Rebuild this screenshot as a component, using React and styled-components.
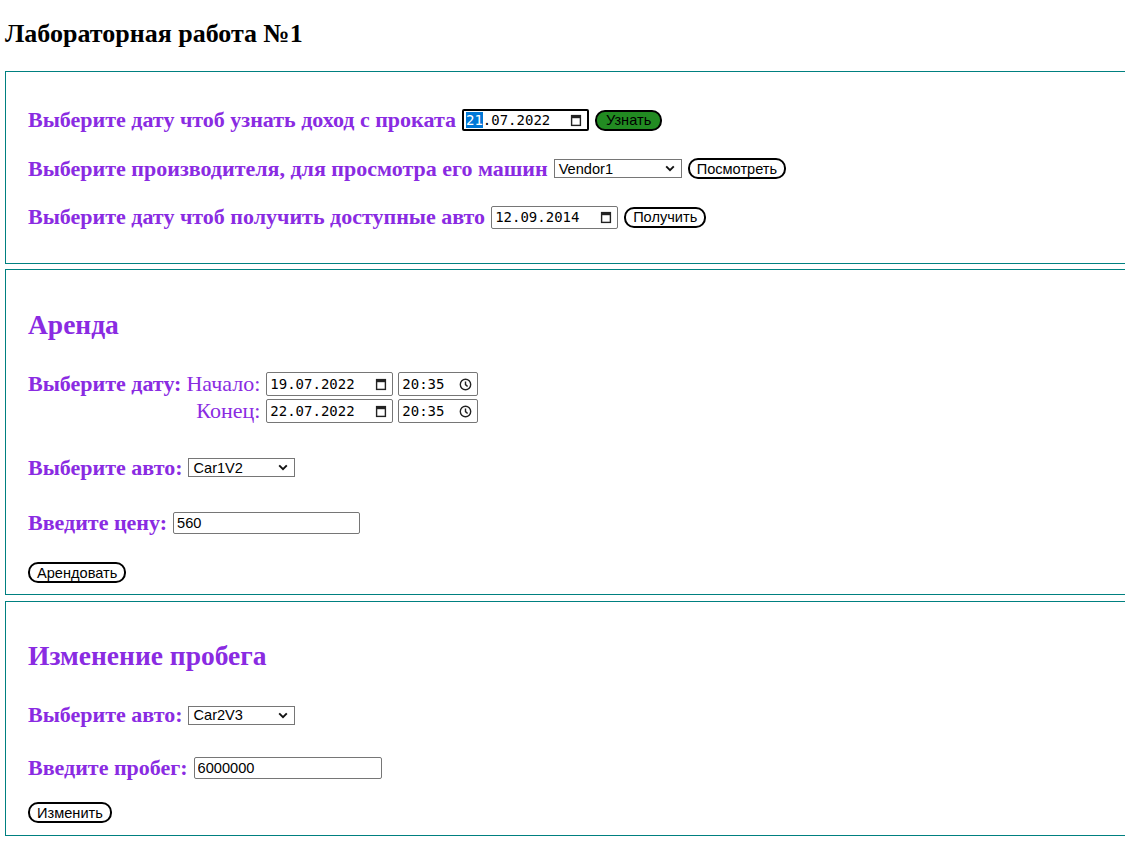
import React from 'react';
import styled, { createGlobalStyle } from 'styled-components';

const GlobalStyle = createGlobalStyle`
  html, body {
    margin: 0;
    padding: 0;
    background: #fff;
    overflow: hidden;
  }
  body {
    font-family: "Liberation Serif", "Times New Roman", serif;
  }
`;

const Page = styled.div`
  padding-left: 5px;
`;

const Title = styled.h1`
  margin: 0;
  padding-top: 19px;
  font-size: 26px;
  line-height: 30px;
  font-weight: bold;
  color: #000;
`;

const Box = styled.section`
  box-sizing: border-box;
  width: 1200px;
  margin-top: ${p => p.$mt}px;
  padding: ${p => p.$pt}px 0 ${p => p.$pb}px 22px;
  border: 1px solid #008080;
  display: flex;
  flex-direction: column;
  align-items: flex-start;
`;

const Heading = styled.h2`
  margin: 0;
  font-size: 27.5px;
  line-height: 30px;
  font-weight: bold;
  color: blueviolet;
`;

const Row = styled.div`
  display: flex;
  align-items: center;
  height: 28px;
  margin-top: ${p => p.$mt || 0}px;
  gap: 6px;
`;

const Label = styled.span`
  font-size: 22px;
  line-height: 26px;
  font-weight: ${p => (p.$plain ? 'normal' : 'bold')};
  color: blueviolet;
  white-space: nowrap;
`;

const DateGrid = styled.div`
  display: grid;
  grid-template-columns: auto auto auto auto;
  justify-content: start;
  grid-auto-rows: 24px;
  row-gap: 3px;
  column-gap: 5px;
  align-items: center;
  margin-top: 32px;
`;

const SideLabel = styled(Label)`
  text-align: right;
  margin-right: 1px;
`;

const Field = styled.div`
  box-sizing: border-box;
  display: flex;
  align-items: center;
  justify-content: space-between;
  width: ${p => p.$w}px;
  height: ${p => p.$h || 23}px;
  padding: 0 5px 0 ${p => (p.$focused ? 2 : 3)}px;
  border: ${p => (p.$focused ? '2px solid #000' : '1px solid #767676')};
  border-radius: 2px;
  background: #fff;
  font-family: "DejaVu Sans Mono", "Liberation Mono", monospace;
  font-size: 14px;
  color: #000;
`;

const Segment = styled.span`
  background: ${p => (p.$active ? '#0078d7' : 'transparent')};
  color: ${p => (p.$active ? '#fff' : 'inherit')};
`;

const SelectBox = styled.div`
  box-sizing: border-box;
  display: flex;
  align-items: center;
  justify-content: space-between;
  width: ${p => p.$w}px;
  height: 19px;
  padding: 0 6px 0 4px;
  border: 1px solid #767676;
  background: #fff;
  font-family: "Liberation Sans", Arial, sans-serif;
  font-size: 14.6px;
  color: #000;
`;

const TextInput = styled.input`
  box-sizing: border-box;
  width: ${p => p.$w}px;
  height: 22px;
  padding: 1px 3px;
  border: 1px solid #767676;
  border-radius: 2px;
  font-family: "Liberation Sans", Arial, sans-serif;
  font-size: 14.6px;
  color: #000;
  outline: none;
`;

const Button = styled.button`
  box-sizing: border-box;
  height: 21px;
  padding: 0 ${p => (p.$green ? 9 : 7)}px;
  border: 2px solid #000;
  border-radius: 10px;
  background: ${p => (p.$green ? '#228b22' : '#fff')};
  font-family: "Liberation Sans", Arial, sans-serif;
  font-size: 14.6px;
  color: #000;
  line-height: 16px;
  cursor: pointer;
`;

const CalendarIcon = () => (
  <svg width="12" height="13" viewBox="0 0 12 13">
    <rect x="1.6" y="1.6" width="8.8" height="9.8" fill="none" stroke="#222" strokeWidth="1.4" />
    <rect x="1" y="1" width="10" height="3.2" fill="#222" />
  </svg>
);

const ClockIcon = () => (
  <svg width="13" height="13" viewBox="0 0 13 13">
    <circle cx="6.5" cy="6.5" r="5.2" fill="none" stroke="#222" strokeWidth="1.4" />
    <path d="M6.5 3.4 V6.6 L8.6 8.6" fill="none" stroke="#222" strokeWidth="1.4" />
  </svg>
);

const Chevron = () => (
  <svg width="10" height="7" viewBox="0 0 10 7">
    <path d="M1.2 1.4 L5 5.2 L8.8 1.4" fill="none" stroke="#111" strokeWidth="1.9" />
  </svg>
);

const DateField = ({ value, focused, w = 127, h }) => {
  const [day, ...rest] = value.split('.');
  return (
    <Field $w={w} $h={h} $focused={focused}>
      <span>
        <Segment $active={focused}>{day}</Segment>.{rest.join('.')}
      </span>
      <CalendarIcon />
    </Field>
  );
};

const TimeField = ({ value }) => (
  <Field $w={80} $h={24}>
    <span>{value}</span>
    <ClockIcon />
  </Field>
);

const Select = ({ value, w }) => (
  <SelectBox $w={w}>
    <span>{value}</span>
    <Chevron />
  </SelectBox>
);

export default function App() {
  return (
    <Page>
      <GlobalStyle />
      <Title>Лабораторная работа №1</Title>

      <Box $mt={22} $pt={34} $pb={32}>
        <Row>
          <Label>Выберите дату чтоб узнать доход с проката</Label>
          <DateField value="21.07.2022" focused h={22} />
          <Button $green>Узнать</Button>
        </Row>
        <Row $mt={20.5}>
          <Label>Выберите производителя, для просмотра его машин</Label>
          <Select value="Vendor1" w={128} />
          <Button>Посмотреть</Button>
        </Row>
        <Row $mt={20.5}>
          <Label>Выберите дату чтоб получить доступные авто</Label>
          <DateField value="12.09.2014" />
          <Button>Получить</Button>
        </Row>
      </Box>

      <Box $mt={5} $pt={40} $pb={7.5}>
        <Heading>Аренда</Heading>
        <DateGrid>
          <Label>Выберите дату:</Label>
          <SideLabel $plain>Начало:</SideLabel>
          <DateField value="19.07.2022" h={24} />
          <TimeField value="20:35" />
          <span />
          <SideLabel $plain>Конец:</SideLabel>
          <DateField value="22.07.2022" h={24} />
          <TimeField value="20:35" />
        </DateGrid>
        <Row $mt={30.5}>
          <Label>Выберите авто:</Label>
          <Select value="Car1V2" w={107} />
        </Row>
        <Row $mt={27}>
          <Label>Введите цену:</Label>
          <TextInput $w={187} defaultValue="560" />
        </Row>
        <Row $mt={22}>
          <Button>Арендовать</Button>
        </Row>
      </Box>

      <Box $mt={6} $pt={39} $pb={8.5}>
        <Heading>Изменение пробега</Heading>
        <Row $mt={30}>
          <Label>Выберите авто:</Label>
          <Select value="Car2V3" w={107} />
        </Row>
        <Row $mt={25}>
          <Label>Введите пробег:</Label>
          <TextInput $w={188} defaultValue="6000000" />
        </Row>
        <Row $mt={16.5}>
          <Button>Изменить</Button>
        </Row>
      </Box>
    </Page>
  );
}
